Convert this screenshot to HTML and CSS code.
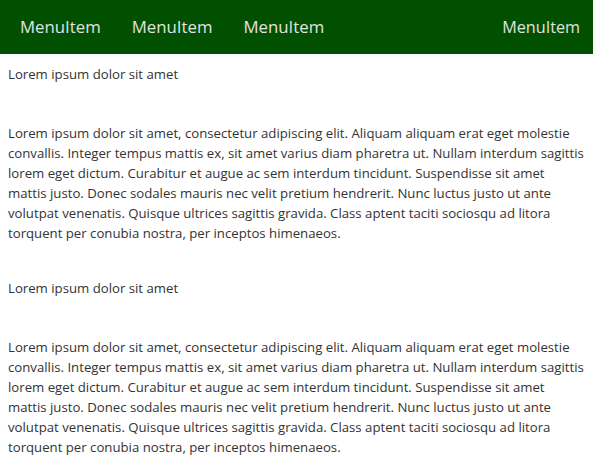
FILE: index.html
```html
<!DOCTYPE html>
<html lang="en">
<head>
<meta charset="utf-8">
<title>Menu</title>
<link rel="stylesheet" href="styles.css">
</head>
<body>
<nav class="navbar">
  <ul class="menu">
    <li class="menu-item">MenuItem</li>
    <li class="menu-item">MenuItem</li>
    <li class="menu-item">MenuItem</li>
  </ul>
  <div class="menu-right">MenuItem</div>
</nav>
<main class="content">
  <p class="lead">Lorem ipsum dolor sit amet</p>
  <p class="text">Lorem ipsum dolor sit amet, consectetur adipiscing elit. Aliquam aliquam erat eget molestie convallis. Integer tempus mattis ex, sit amet varius diam pharetra ut. Nullam interdum sagittis lorem eget dictum. Curabitur et augue ac sem interdum tincidunt. Suspendisse sit amet mattis justo. Donec sodales mauris nec velit pretium hendrerit. Nunc luctus justo ut ante volutpat venenatis. Quisque ultrices sagittis gravida. Class aptent taciti sociosqu ad litora torquent per conubia nostra, per inceptos himenaeos.</p>
  <p class="lead">Lorem ipsum dolor sit amet</p>
  <p class="text">Lorem ipsum dolor sit amet, consectetur adipiscing elit. Aliquam aliquam erat eget molestie convallis. Integer tempus mattis ex, sit amet varius diam pharetra ut. Nullam interdum sagittis lorem eget dictum. Curabitur et augue ac sem interdum tincidunt. Suspendisse sit amet mattis justo. Donec sodales mauris nec velit pretium hendrerit. Nunc luctus justo ut ante volutpat venenatis. Quisque ultrices sagittis gravida. Class aptent taciti sociosqu ad litora torquent per conubia nostra, per inceptos himenaeos.</p>
</main>
</body>
</html>
```

FILE: styles.css
```css
html, body {
  margin: 0;
  padding: 0;
  background: #ffffff;
}

body {
  font-family: "Open Sans", "Noto Sans", sans-serif;
  color: #333333;
}

.navbar {
  display: flex;
  align-items: center;
  justify-content: space-between;
  height: 54px;
  background: #005000;
  color: #e2e2e2;
  padding: 0 13px 0 4.5px;
}

.menu {
  display: flex;
  list-style: none;
  margin: 0;
  padding: 0;
}

.menu-item {
  padding: 0 15.5px;
  font-size: 16.8px;
  line-height: 20px;
}

.menu-right {
  font-size: 16.2px;
  line-height: 20px;
}

.content {
  padding: 10px 9px 0 8px;
  font-size: 13.2px;
  line-height: 20px;
}

.content p {
  margin: 0;
}

.content .lead {
  margin-bottom: 39px;
}

.content .text {
  margin-bottom: 35px;
}

.content .text:last-child {
  margin-bottom: 0;
}
```
